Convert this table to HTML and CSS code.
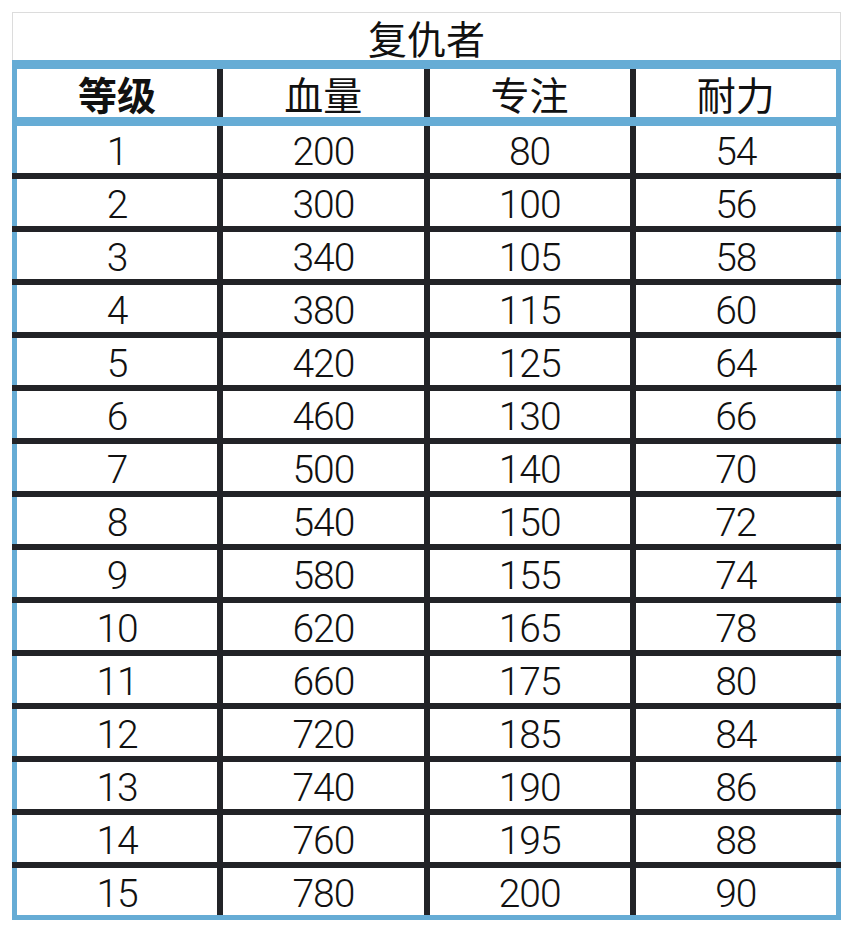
FILE: index.html
```html
<!DOCTYPE html>
<html lang="zh">
<head>
<meta charset="utf-8">
<link rel="stylesheet" href="styles.css">
</head>
<body>
<div class="sheet">
  <div class="title">复仇者</div>
  <div class="head">
    <div class="row">
      <div class="cell cjk bold">等级</div>
      <div class="cell cjk">血量</div>
      <div class="cell cjk">专注</div>
      <div class="cell cjk">耐力</div>
    </div>
  </div>
  <div class="body">
    <div class="row"><div class="cell">1</div><div class="cell">200</div><div class="cell">80</div><div class="cell">54</div></div>
    <div class="row"><div class="cell">2</div><div class="cell">300</div><div class="cell">100</div><div class="cell">56</div></div>
    <div class="row"><div class="cell">3</div><div class="cell">340</div><div class="cell">105</div><div class="cell">58</div></div>
    <div class="row"><div class="cell">4</div><div class="cell">380</div><div class="cell">115</div><div class="cell">60</div></div>
    <div class="row"><div class="cell">5</div><div class="cell">420</div><div class="cell">125</div><div class="cell">64</div></div>
    <div class="row"><div class="cell">6</div><div class="cell">460</div><div class="cell">130</div><div class="cell">66</div></div>
    <div class="row"><div class="cell">7</div><div class="cell">500</div><div class="cell">140</div><div class="cell">70</div></div>
    <div class="row"><div class="cell">8</div><div class="cell">540</div><div class="cell">150</div><div class="cell">72</div></div>
    <div class="row"><div class="cell">9</div><div class="cell">580</div><div class="cell">155</div><div class="cell">74</div></div>
    <div class="row"><div class="cell">10</div><div class="cell">620</div><div class="cell">165</div><div class="cell">78</div></div>
    <div class="row"><div class="cell">11</div><div class="cell">660</div><div class="cell">175</div><div class="cell">80</div></div>
    <div class="row"><div class="cell">12</div><div class="cell">720</div><div class="cell">185</div><div class="cell">84</div></div>
    <div class="row"><div class="cell">13</div><div class="cell">740</div><div class="cell">190</div><div class="cell">86</div></div>
    <div class="row"><div class="cell">14</div><div class="cell">760</div><div class="cell">195</div><div class="cell">88</div></div>
    <div class="row"><div class="cell">15</div><div class="cell">780</div><div class="cell">200</div><div class="cell">90</div></div>
  </div>
</div>
</body>
</html>
```

FILE: styles.css
```css
html, body {
  margin: 0;
  padding: 0;
  background: #ffffff;
}

.sheet {
  width: 829px;
  margin: 12px 0 0 12px;
  color: #111;
}

.title {
  box-sizing: border-box;
  height: 48px;
  border: 1px solid #dcdcdc;
  border-bottom: none;
  font-family: "Noto Sans CJK SC", sans-serif;
  font-size: 39px;
  line-height: 48px;
  text-align: center;
}

.head {
  border-top: 9px solid #66acd5;
  border-bottom: 9px solid #66acd5;
}

.head .row {
  height: 48px;
}

.body {
  display: flex;
  flex-direction: column;
  gap: 6px;
  background: #222327;
  border-bottom: 5px solid #66acd5;
}

.row {
  display: grid;
  grid-template-columns: repeat(4, 1fr);
  column-gap: 6px;
  background: #222327;
  border-left: 5px solid #66acd5;
  border-right: 5px solid #66acd5;
  height: 47px;
}

.cell {
  background: #ffffff;
  display: flex;
  align-items: center;
  justify-content: center;
  font-family: Roboto, "Noto Sans", sans-serif;
  font-size: 39px;
  font-weight: 300;
  letter-spacing: -1px;
  line-height: 40px;
  padding-top: 4px;
  box-sizing: border-box;
}

.cell.cjk {
  font-family: "Noto Sans CJK SC", sans-serif;
  font-size: 39px;
  font-weight: 400;
  letter-spacing: 0;
  line-height: 44px;
  padding-top: 0;
}

.cell.bold {
  font-weight: 700;
}
```
